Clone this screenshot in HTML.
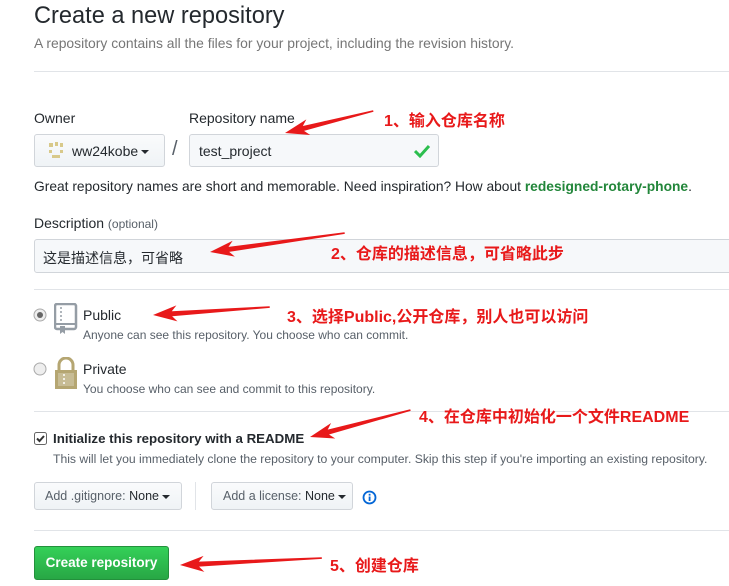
<!DOCTYPE html>
<html><head><meta charset="utf-8"><style>
body{margin:0;width:729px;height:586px;background:#fff;position:relative;overflow:hidden;font-family:"Liberation Sans","Noto Sans CJK SC",sans-serif;color:#333}
.a{position:absolute;white-space:nowrap}
.hr{position:absolute;left:34px;right:0;height:1px;background:#e1e4e8}
.btn{position:absolute;border:1px solid #d1d5da;border-radius:3px;background:linear-gradient(#fafbfc,#eff3f6);box-sizing:border-box;font-size:12.5px;color:#586069}
.inp{position:absolute;border:1px solid #d1d5da;border-radius:3px;background:#f6f8fa;box-sizing:border-box;font-size:14px;color:#24292e}
.red{color:#e8191a;font-weight:bold;font-size:16px;position:absolute;white-space:nowrap}
.car{display:inline-block;width:0;height:0;border-left:4px solid transparent;border-right:4px solid transparent;border-top:4px solid #24292e;vertical-align:middle;margin-left:3px}
</style></head><body>
<div class="a" style="left:34px;top:3px;font-size:23.6px;color:#24292e">Create a new repository</div>
<div class="a" style="left:34px;top:35px;font-size:13.9px;color:#767676">A repository contains all the files for your project, including the revision history.</div>
<div class="hr" style="top:71px"></div>
<div class="a" style="left:34px;top:110px;font-size:14px;color:#24292e">Owner</div>
<div class="a" style="left:189px;top:110px;font-size:14px;color:#24292e">Repository name</div>
<div class="btn" style="left:34px;top:134px;width:131px;height:33px;font-size:14px;color:#24292e">
<svg style="position:absolute;left:13px;top:7px" width="16" height="18"><rect x="1" y="1" width="4" height="4" fill="#d8c98a"/><rect x="7" y="0" width="3" height="4" fill="#d8c98a"/><rect x="12" y="1" width="3" height="4" fill="#d8c98a"/><rect x="1" y="8" width="3" height="3" fill="#d8c98a"/><rect x="12" y="8" width="3" height="3" fill="#d8c98a"/><rect x="4" y="13" width="8" height="3" fill="#d8c98a"/></svg>
<span class="a" style="left:37px;top:8px">ww24kobe<span class="car"></span></span></div>
<div class="a" style="left:172px;top:138px;font-size:20px;color:#586069">/</div>
<div class="inp" style="left:189px;top:134px;width:250px;height:33px"><span class="a" style="left:9px;top:8px">test_project</span>
<svg style="position:absolute;right:8px;top:9px" width="16" height="14"><path d="M1 7 L6 12 L15 2" stroke="#2cbe4e" stroke-width="3" fill="none"/></svg></div>
<div class="a" style="left:34px;top:179px;font-size:13.8px;color:#24292e">Great repository names are short and memorable. Need inspiration? How about <b style="color:#22863a">redesigned-rotary-phone</b>.</div>
<div class="a" style="left:34px;top:215px;font-size:14px;color:#24292e">Description <span style="font-size:12px;color:#586069">(optional)</span></div>
<div class="inp" style="left:34px;top:239px;width:700px;height:34px"><span class="a" style="left:8px;top:8px;font-size:14px">这是描述信息，可省略</span></div>
<div class="hr" style="top:289px"></div>
<svg class="a" style="left:33px;top:308px" width="14" height="14"><circle cx="7" cy="7" r="6" fill="#eee" stroke="#aaa"/><circle cx="7" cy="7" r="3" fill="#666"/></svg>
<svg class="a" style="left:54px;top:303px" width="24" height="32"><rect x="1" y="1" width="21" height="25" rx="2" fill="none" stroke="#959da5" stroke-width="2.5"/><rect x="1" y="20" width="21" height="2" fill="#959da5"/><path d="M7 4v2M7 8v2M7 12v2M7 16v2" stroke="#959da5" stroke-width="1.5"/><path d="M6 23h5v8l-2.5-2-2.5 2z" fill="#959da5"/></svg>
<div class="a" style="left:83px;top:307px;font-size:14px;color:#24292e">Public</div>
<div class="a" style="left:83px;top:328px;font-size:12px;color:#586069">Anyone can see this repository. You choose who can commit.</div>
<svg class="a" style="left:33px;top:362px" width="14" height="14"><circle cx="7" cy="7" r="6" fill="#eee" stroke="#aaa"/></svg>
<svg class="a" style="left:54px;top:357px" width="24" height="33"><path d="M5 13V8a7 7 0 0 1 14 0v5" fill="none" stroke="#b5a672" stroke-width="3"/><rect x="1" y="13" width="22" height="19" fill="#b5a672"/><rect x="4" y="16" width="16" height="13" fill="#fff" opacity=".25"/><path d="M10 17v2M10 21v2M10 25v2" stroke="#fff" stroke-width="1.5"/></svg>
<div class="a" style="left:83px;top:361px;font-size:14px;color:#24292e">Private</div>
<div class="a" style="left:83px;top:382px;font-size:12px;color:#586069">You choose who can see and commit to this repository.</div>
<div class="hr" style="top:411px"></div>
<svg class="a" style="left:34px;top:432px" width="13" height="13"><rect x=".5" y=".5" width="12" height="12" rx="2" fill="#fff" stroke="#666"/><path d="M3 6.5l2.5 2.5 4.5-5" stroke="#333" stroke-width="2" fill="none"/></svg>
<div class="a" style="left:53px;top:431px;font-size:13.3px;font-weight:bold;color:#24292e">Initialize this repository with a README</div>
<div class="a" style="left:53px;top:452px;font-size:12.2px;color:#586069">This will let you immediately clone the repository to your computer. Skip this step if you're importing an existing repository.</div>
<div class="btn" style="left:34px;top:482px;width:148px;height:28px"><span class="a" style="left:10px;top:6px">Add .gitignore: <span style="color:#24292e">None</span><span class="car"></span></span></div>
<div class="a" style="left:195px;top:482px;width:1px;height:28px;background:#e1e4e8"></div>
<div class="btn" style="left:211px;top:482px;width:142px;height:28px"><span class="a" style="left:11px;top:6px">Add a license: <span style="color:#24292e">None</span><span class="car"></span></span></div>
<svg class="a" style="left:362px;top:490px" width="15" height="15"><circle cx="7.5" cy="7.5" r="6" fill="none" stroke="#0366d6" stroke-width="1.8"/><rect x="6.7" y="6.5" width="1.8" height="4.5" fill="#0366d6"/><rect x="6.7" y="3.8" width="1.8" height="1.8" fill="#0366d6"/></svg>
<div class="hr" style="top:530px"></div>
<div class="a" style="left:34px;top:546px;width:135px;height:34px;border-radius:3px;background:linear-gradient(#34d058,#28a745);border:1px solid #23903c;box-sizing:border-box;color:#fff;font-weight:bold;font-size:13.5px;text-align:center;line-height:32px">Create repository</div>

<div class="red" style="left:384px;top:107px">1、输入仓库名称</div>
<div class="red" style="left:331px;top:240px">2、仓库的描述信息，可省略此步</div>
<div class="red" style="left:287px;top:303px">3、选择Public,公开仓库，别人也可以访问</div>
<div class="red" style="left:419px;top:403px">4、在仓库中初始化一个文件README</div>
<div class="red" style="left:330px;top:552px">5、创建仓库</div>
<svg class="a" style="left:0;top:0" width="729" height="586">
<g fill="#e8191a">
<polygon transform="translate(285,133) rotate(-14)" points="0,0 24,-8 19,-2.5 91,-0.8 91,0.8 19,2.5 24,8"/>
<polygon transform="translate(210,252) rotate(-8)" points="0,0 24,-8 19,-2.5 136,-0.8 136,0.8 19,2.5 24,8"/>
<polygon transform="translate(153,315) rotate(-3.9)" points="0,0 24,-8 19,-2.5 117,-0.8 117,0.8 19,2.5 24,8"/>
<polygon transform="translate(310,437) rotate(-15)" points="0,0 24,-8 19,-2.5 104,-0.8 104,0.8 19,2.5 24,8"/>
<polygon transform="translate(180,565) rotate(-2.8)" points="0,0 24,-8 19,-2.5 142,-0.8 142,0.8 19,2.5 24,8"/>
</g></svg>
</body></html>
